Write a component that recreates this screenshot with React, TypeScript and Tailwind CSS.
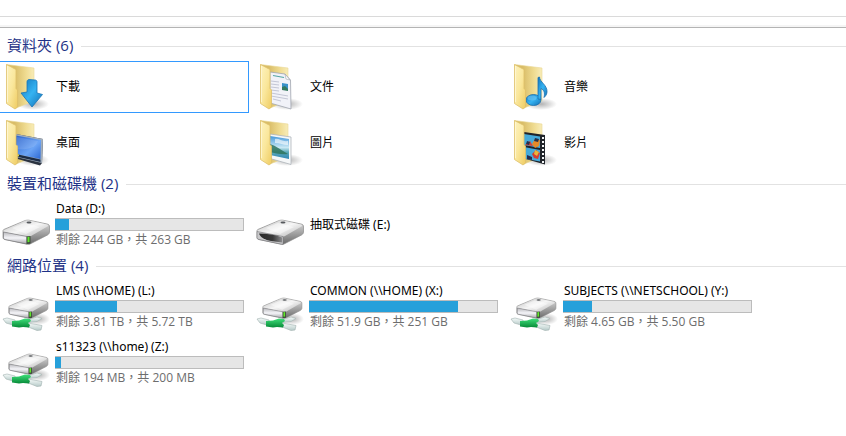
import type { ReactNode } from "react";

type FolderKind = "downloads" | "documents" | "music" | "desktop" | "pictures" | "videos";
type DriveKind = "local" | "removable" | "network";

interface Drive {
  name: string;
  kind: DriveKind;
  info?: string;
  used?: number;
}

const folders: { name: string; kind: FolderKind }[] = [
  { name: "下載", kind: "downloads" },
  { name: "文件", kind: "documents" },
  { name: "音樂", kind: "music" },
  { name: "桌面", kind: "desktop" },
  { name: "圖片", kind: "pictures" },
  { name: "影片", kind: "videos" },
];

const devices: Drive[] = [
  { name: "Data (D:)", kind: "local", info: "剩餘 244 GB，共 263 GB", used: 19 / 263 },
  { name: "抽取式磁碟 (E:)", kind: "removable" },
];

const networkDrives: Drive[] = [
  { name: "LMS (\\\\HOME) (L:)", kind: "network", info: "剩餘 3.81 TB，共 5.72 TB", used: 1.89 / 5.72 },
  { name: "COMMON (\\\\HOME) (X:)", kind: "network", info: "剩餘 51.9 GB，共 251 GB", used: 199 / 251 },
  { name: "SUBJECTS (\\\\NETSCHOOL) (Y:)", kind: "network", info: "剩餘 4.65 GB，共 5.50 GB", used: 0.85 / 5.5 },
  { name: "s11323 (\\\\home) (Z:)", kind: "network", info: "剩餘 194 MB，共 200 MB", used: 6 / 200 },
];

function Gradients() {
  return (
    <svg width="0" height="0" className="absolute" aria-hidden="true">
      <defs>
        <linearGradient id="flap" x1="0" y1="0" x2="1" y2="1">
          <stop offset="0" stopColor="#fdf3c0" />
          <stop offset="0.5" stopColor="#fae79c" />
          <stop offset="1" stopColor="#efcc62" />
        </linearGradient>
        <linearGradient id="back" x1="0" y1="0" x2="1" y2="0">
          <stop offset="0.3" stopColor="#d9bd68" />
          <stop offset="0.7" stopColor="#efdb90" />
          <stop offset="1" stopColor="#f8ecb8" />
        </linearGradient>
        <linearGradient id="arrow" x1="0" y1="0" x2="1" y2="1">
          <stop offset="0" stopColor="#1377bd" />
          <stop offset="0.5" stopColor="#35b3f2" />
          <stop offset="1" stopColor="#126fb4" />
        </linearGradient>
        <linearGradient id="screen" x1="0" y1="0" x2="1" y2="1">
          <stop offset="0" stopColor="#2a62cc" />
          <stop offset="0.6" stopColor="#6ba4f6" />
          <stop offset="1" stopColor="#2c68d4" />
        </linearGradient>
        <linearGradient id="photo" x1="0" y1="0" x2="0" y2="1">
          <stop offset="0" stopColor="#4598db" />
          <stop offset="0.5" stopColor="#c9e8f4" />
          <stop offset="0.7" stopColor="#5aa9b8" />
          <stop offset="1" stopColor="#3186b5" />
        </linearGradient>
        <linearGradient id="metal" x1="0" y1="0" x2="1" y2="1">
          <stop offset="0" stopColor="#bdbdbd" />
          <stop offset="0.5" stopColor="#f6f6f6" />
          <stop offset="1" stopColor="#b4b4b4" />
        </linearGradient>
        <linearGradient id="face" x1="0" y1="0" x2="0" y2="1">
          <stop offset="0" stopColor="#b9b9bd" />
          <stop offset="0.5" stopColor="#f4f4f8" />
          <stop offset="1" stopColor="#a6a6aa" />
        </linearGradient>
        <linearGradient id="side" x1="0" y1="0" x2="0" y2="1">
          <stop offset="0" stopColor="#e2e2e2" />
          <stop offset="1" stopColor="#6a6a6a" />
        </linearGradient>
        <linearGradient id="slot" x1="0" y1="0" x2="1" y2="0">
          <stop offset="0" stopColor="#2a2a2a" />
          <stop offset="0.6" stopColor="#3a3a3a" />
          <stop offset="1" stopColor="#8a8a8c" />
        </linearGradient>
        <linearGradient id="glass" x1="0" y1="0" x2="0" y2="1">
          <stop offset="0" stopColor="#f6fbfa" />
          <stop offset="1" stopColor="#b6cac8" />
        </linearGradient>
        <linearGradient id="cable" x1="0" y1="0" x2="0" y2="1">
          <stop offset="0" stopColor="#3fe07a" />
          <stop offset="1" stopColor="#078a38" />
        </linearGradient>
        <radialGradient id="shade">
          <stop offset="0" stopColor="#000000" stopOpacity="0.3" />
          <stop offset="1" stopColor="#000000" stopOpacity="0" />
        </radialGradient>
      </defs>
    </svg>
  );
}

const folderContents: Record<FolderKind, ReactNode> = {
  downloads: (
    <path
      d="M25 18.500c0-1 1-2 2-2l6 .5c1.500 0 2 1 2 2v11l5.500 1.500L30 44 19 30l6-1z"
      fill="url(#arrow)"
      stroke="#1a75b5"
      strokeWidth="0.800"
    />
  ),
  documents: (
    <>
      <path d="M14 9l15 2 5.500 6 .5 29-21-6z" fill="#f1f2f8" stroke="#a0a4ae" strokeWidth="0.800" />
      <path d="M29 11l1 5 4 1z" fill="#ffffff" stroke="#a0a4ae" strokeWidth="0.600" />
      <path d="M17 12.500l11 2" stroke="#55a6a4" strokeWidth="1.200" />
      <path
        d="M15 18l8 1M15 21l8 1M15 24l8 1M15 27l8 1M15 30l17 3M15 33l17 3M17 36l8 2"
        stroke="#c3c6d6"
        strokeWidth="1"
      />
      <path d="M26 20l6 1v6l-6-1z" fill="#3a91c9" />
      <path d="M26 24l3-1 3 3v2l-6-1z" fill="#34795e" />
    </>
  ),
  music: (
    <>
      <ellipse cx="23.500" cy="37" rx="7.500" ry="5.500" fill="url(#arrow)" stroke="#1b6dac" strokeWidth="0.800" />
      <path
        d="M28 36V14.500l1.500-.5c0 5 8 8 7.500 15-.2 3-2 4.500-3 5.500 1-5 0-7.500-3-9v11z"
        fill="url(#arrow)"
        stroke="#1b6dac"
        strokeWidth="0.800"
      />
      <ellipse cx="22" cy="35" rx="4.500" ry="2.500" fill="#6fc4f2" opacity="0.600" />
    </>
  ),
  desktop: (
    <>
      <path d="M14 15l27 5-1 24-2 2.500-24-7z" fill="#2b3340" />
      <path d="M14 15l27 5-1 24-26-6z" fill="#a3afbc" />
      <path d="M14 16.500l25 4.500-.5 19L14 35z" fill="url(#screen)" />
      <path d="M14 35l24.500 5.500V43L14 37.500z" fill="#1b2c47" />
      <path d="M15 35l2 .5v2l-2-.5z" fill="#d5cf45" />
      <path d="M15 18l21 4c-2 7-11 9-21 8z" fill="#ffffff" opacity="0.120" />
    </>
  ),
  pictures: (
    <>
      <path d="M14 15l21 3v27.500l-21-6z" fill="#f5f7f8" stroke="#aeb5bb" strokeWidth="0.800" />
      <path d="M14 17l19 3v20l-19-4z" fill="url(#photo)" />
      <path d="M14 25c6 2 11 6 18 10-7 1-13-1-18-2z" fill="#2e745d" opacity="0.850" />
      <path d="M19 20c4-1 7 3 13 2v4c-5 0-8-2-13-2z" fill="#ffffff" opacity="0.600" />
    </>
  ),
  videos: (
    <>
      <path d="M14 13l21 3v29.500l-21-6z" fill="#20242a" />
      <path d="M14 15l16 2.500V29l-16-3zM14 28l16 3v11.500l-16-3z" fill="#45aada" />
      <path d="M15 26l5-4 3 5z" fill="#d64238" />
      <path d="M22 25l3-5 5 1-1 6-4 2z" fill="#e58a28" />
      <path d="M25 19l4 1-1 3-4-1zM17 22l3 1-1 3-3-1z" fill="#273049" />
      <path d="M22 35l4-4 4 3-2 6-4-1z" fill="#d43e34" />
      <path d="M25 31l4 2-2 4-3-2z" fill="#e8b63a" />
      <path d="M17 36l5 2v3l-5-1z" fill="#272c4f" />
      <path d="M33 18v27" stroke="#f3f5f6" strokeWidth="2" strokeDasharray="2 2" />
    </>
  ),
};

function FolderIcon({ kind }: { kind: FolderKind }) {
  return (
    <svg viewBox="0 0 48 48" className="size-12 shrink-0" aria-hidden="true">
      <ellipse cx="31" cy="41" rx="16" ry="6" fill="url(#shade)" />
      <path d="M4.500 1.500L32 5v33l-18 7z" fill="url(#back)" stroke="#ead693" strokeWidth="0.600" />
      {folderContents[kind]}
      <path d="M4.500 1.500l9.500 5v19l1.500 1.500v17L13 46l-8.500-5.500z" fill="url(#flap)" stroke="#dec069" strokeWidth="0.800" />
      <path d="M5.500 3v36" stroke="#fff8d6" strokeWidth="0.800" />
    </svg>
  );
}

function DriveBody({ removable = false }: { removable?: boolean }) {
  return (
    <>
      <path
        d="M1 30c0-1 .5-1.500 2-2l19-8c2-1 4-1 6-.6l17 3.600c2 .5 2.500 1 2.500 3v5c0 1-.5 2-2 3L29 42.500c-1.500 1-3 1-5 .5L3 38.500c-1.500-.4-2-1-2-2z"
        fill="url(#side)"
        stroke="#8a8a8a"
        strokeWidth="0.700"
      />
      <path
        d="M2 29l21-9c1.500-.6 3-.6 5-.2l17 3.600c1.500.4 1.500 1.600 0 2.400L29 35c-1.500.8-3 .7-5 .3L2 31c-1-.5-1-1.500 0-2z"
        fill="url(#metal)"
      />
      <path d="M10 27l12-5 16 4-14 7z" fill="#ffffff" opacity="0.450" />
      <ellipse cx="27" cy="21.500" rx="2.500" ry="0.900" fill="#55585c" />
      {removable ? (
        <>
          <path d="M1 30.500l26 5v8L3 38.500c-1.500-.4-2-1-2-2z" fill="#c9c9cb" stroke="#77777b" strokeWidth="0.600" />
          <path d="M3 32.500c8 0 16 1 23 4v5L15 40C9 39 4 36 3 32.500z" fill="url(#slot)" />
        </>
      ) : (
        <>
          <path
            d="M1.500 31L25 35.500v7.500L3 38.500c-1-.3-1.500-.8-1.500-2z"
            fill="url(#face)"
            stroke="#77777b"
            strokeWidth="0.600"
          />
          <path d="M24.500 35.500l4-.5v7.500l-4 .5z" fill="#3c4a3a" />
          <path d="M25.500 36l2-.3v5.300l-2 .3z" fill="#5fe62a" />
        </>
      )}
    </>
  );
}

function DriveIcon({ kind }: { kind: DriveKind }) {
  return (
    <svg viewBox="0 0 48 48" className="size-12 shrink-0" aria-hidden="true">
      {kind === "network" ? (
        <>
          <ellipse cx="36" cy="36" rx="12" ry="6" fill="url(#shade)" />
          <g transform="translate(6 -1) scale(0.84 0.84)">
            <DriveBody />
          </g>
          <path d="M1 36l4-1 8 2 1 4-3 1-7-2z" fill="url(#glass)" stroke="#9fb0ae" strokeWidth="0.600" />
          <path d="M25 37l10-3 5 1.500-5 3-8 1z" fill="url(#glass)" stroke="#a6b5b3" strokeWidth="0.600" />
          <path d="M26 40l14 2.500-1 4.500-4 .5-10-4z" fill="url(#glass)" stroke="#9fb0ae" strokeWidth="0.600" />
          <path d="M10 38l7-.5 6-2 5 .5 1 2-3 2 2 2-1 2.500-6-.5-4 .5-7-1z" fill="url(#cable)" />
        </>
      ) : (
        <DriveBody removable={kind === "removable"} />
      )}
    </svg>
  );
}

function Tile({ icon, selected = false, children }: { icon: ReactNode; selected?: boolean; children: ReactNode }) {
  return (
    <button
      type="button"
      className={
        selected
          ? "flex h-[52px] items-center border border-l-0 border-[#3399ff] pl-0.5 text-left"
          : "flex h-[52px] items-center border border-l-0 border-transparent pl-0.5 text-left"
      }
    >
      {icon}
      <span className="ml-[5px] min-w-0 flex-1 pr-1">{children}</span>
    </button>
  );
}

function DriveTile({ drive }: { drive: Drive }) {
  return (
    <Tile icon={<DriveIcon kind={drive.kind} />}>
      <span className="block truncate pl-px font-['Noto_Sans','Noto_Sans_CJK_TC',sans-serif] leading-[18px]">
        {drive.name}
      </span>
      {drive.used !== undefined && (
        <>
          <span className="block h-[13px] border-y border-r border-[#bcbcbc] bg-[#e6e6e6]">
            <span className="block h-full bg-[#26a0da]" style={{ width: `${drive.used * 100}%` }} />
          </span>
          <span className="block truncate pb-px pl-px leading-[18px] text-[#6d6d6d]">{drive.info}</span>
        </>
      )}
    </Tile>
  );
}

function Group({ title, count, children }: { title: string; count: number; children: ReactNode }) {
  return (
    <section>
      <div className="flex h-[30px] items-center gap-2 pl-[7px]">
        <h2 className="pb-0.5 text-[15px] leading-5 text-[#1e3287]">
          {title} ({count})
        </h2>
        <div className="h-px flex-1 bg-[#e2e2e2]" />
      </div>
      <div className="grid grid-cols-[repeat(auto-fill,249px)] gap-x-[5px] gap-y-1">{children}</div>
    </section>
  );
}

export default function App() {
  return (
    <main
      lang="zh-Hant"
      className="min-h-screen bg-white font-['Open_Sans','Noto_Sans_CJK_TC',sans-serif] text-[12px] text-black"
    >
      <Gradients />
      <div className="h-[17px] border-b border-[#dadada]" />
      <div className="flex h-[11px] flex-col justify-end border-b border-[#b4b4b4]">
        <div className="h-0.5 bg-[#f5f5f5]" />
      </div>
      <div className="pt-[3px]">
        <Group title="資料夾" count={folders.length}>
          {folders.map((folder, i) => (
            <Tile key={folder.kind} icon={<FolderIcon kind={folder.kind} />} selected={i === 0}>
              <span className="block truncate pl-px leading-[18px]">{folder.name}</span>
            </Tile>
          ))}
        </Group>
        <Group title="裝置和磁碟機" count={devices.length}>
          {devices.map((drive) => (
            <DriveTile key={drive.name} drive={drive} />
          ))}
        </Group>
        <Group title="網路位置" count={networkDrives.length}>
          {networkDrives.map((drive) => (
            <DriveTile key={drive.name} drive={drive} />
          ))}
        </Group>
      </div>
    </main>
  );
}
